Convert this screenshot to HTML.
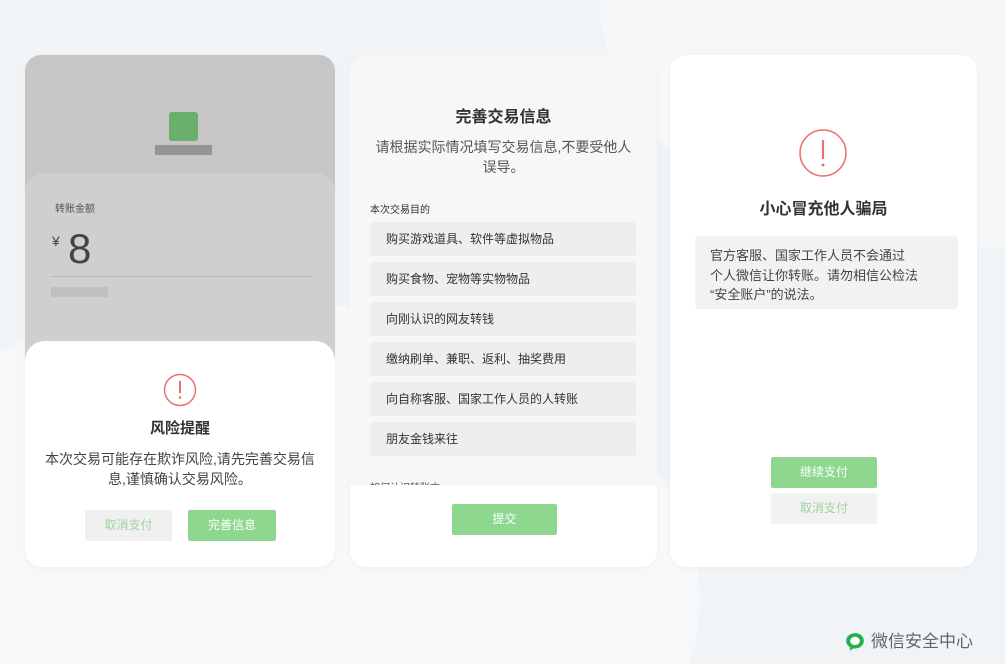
<!DOCTYPE html>
<html style="width:1005px;height:664px;overflow:hidden"><head><meta charset="utf-8"><style>
*{margin:0;padding:0;box-sizing:border-box}
body{width:1005px;height:664px;background:#f1f4f6;position:relative;overflow:hidden;font-family:"Liberation Sans","Noto Sans CJK SC",sans-serif;color:#333}
.abs{position:absolute}
.card{position:absolute;top:55px;height:512px;border-radius:16px;overflow:hidden;box-shadow:0 1px 4px rgba(0,0,0,.04)}
.c{text-align:center;position:absolute;left:0;right:0}
.btn{position:absolute;height:31px;line-height:31px;text-align:center;font-size:12px;border-radius:2px}
.g{background:#8dd88e;color:#fff}
.gr{background:#f0f0f0;color:#9dd49f}
.opt{position:absolute;left:20px;width:266px;height:34px;background:#eeeeee;border-radius:3px;font-size:12px;line-height:34px;padding-left:16px;color:#333}
</style></head><body>
<div class="abs" style="left:0;top:0;width:1005px;height:664px;overflow:hidden">
<div class="abs" style="left:-200px;top:300px;width:900px;height:600px;border-radius:50%;background:#f6f8f9"></div>
<div class="abs" style="left:600px;top:-250px;width:700px;height:500px;border-radius:50%;background:#f5f7f8"></div>
</div>

<!-- card 1 -->
<div class="card" style="left:25px;width:310px;background:#c6c6c6">
  <div class="abs" style="left:144px;top:57px;width:29px;height:29px;background:#6baf6d;border-radius:3px"></div>
  <div class="abs" style="left:130px;top:90px;width:57px;height:10px;background:#949494"></div>
  <div class="abs" style="left:0;top:118px;width:310px;height:240px;background:#cfcfcf;border-radius:20px 20px 0 0"></div>
  <div class="abs" style="left:30px;top:145px;font-size:10px;color:#555">转账金额</div>
  <div class="abs" style="left:27px;top:178px;font-size:14px;color:#444">¥</div>
  <div class="abs" style="left:43px;top:170px;font-size:42px;color:#444;line-height:48px;font-weight:300">8</div>
  <div class="abs" style="left:26px;top:221px;width:260px;height:1px;background:#b9b9b9"></div>
  <div class="abs" style="left:26px;top:232px;width:57px;height:10px;background:#c0c0c0"></div>
  <div class="abs" style="left:0;top:286px;width:310px;height:226px;background:#fff;border-radius:20px 20px 0 0">
    <svg class="abs" style="left:138px;top:32px" width="34" height="34" viewBox="0 0 34 34"><circle cx="17" cy="17" r="15.5" fill="none" stroke="#e97070" stroke-width="1.5"/><line x1="17" y1="8" x2="17" y2="20" stroke="#e97070" stroke-width="2"/><circle cx="17" cy="24.5" r="1.3" fill="#e97070"/></svg>
    <div class="c" style="top:76px;font-size:15px;font-weight:bold;color:#333">风险提醒</div>
    <div class="c" style="top:108px;font-size:14px;line-height:20px;color:#444">本次交易可能存在欺诈风险,请先完善交易信<br>息,谨慎确认交易风险。</div>
  </div>
  <div class="btn gr" style="left:60px;top:455px;width:87px">取消支付</div>
  <div class="btn g" style="left:163px;top:455px;width:88px">完善信息</div>
</div>

<!-- card 2 -->
<div class="card" style="left:350px;width:307px;background:#f7f7f7">
  <div class="c" style="top:48px;font-size:16px;font-weight:bold;color:#333">完善交易信息</div>
  <div class="c" style="top:82px;font-size:14px;line-height:20px;color:#555">请根据实际情况填写交易信息,不要受他人<br>误导。</div>
  <div class="abs" style="left:20px;top:146px;font-size:10px;color:#333">本次交易目的</div>
  <div class="opt" style="top:167px">购买游戏道具、软件等虚拟物品</div>
  <div class="opt" style="top:207px">购买食物、宠物等实物物品</div>
  <div class="opt" style="top:247px">向刚认识的网友转钱</div>
  <div class="opt" style="top:287px">缴纳刷单、兼职、返利、抽奖费用</div>
  <div class="opt" style="top:327px">向自称客服、国家工作人员的人转账</div>
  <div class="opt" style="top:367px">朋友金钱来往</div>
  <div class="abs" style="left:20px;top:424px;font-size:10px;color:#555">如何认识转账方</div>
  <div class="abs" style="left:0;top:430px;width:307px;height:82px;background:#fff"></div>
  <div class="btn g" style="left:102px;top:449px;width:105px">提交</div>
</div>

<!-- card 3 -->
<div class="card" style="left:670px;width:307px;background:#fff">
  <svg class="abs" style="left:128px;top:73px" width="50" height="50" viewBox="0 0 50 50"><circle cx="25" cy="25" r="23" fill="none" stroke="#e97070" stroke-width="1.5"/><line x1="25" y1="12" x2="25" y2="31" stroke="#e97070" stroke-width="2.2"/><circle cx="25" cy="37" r="1.5" fill="#e97070"/></svg>
  <div class="c" style="top:140px;font-size:16px;font-weight:bold;color:#333">小心冒充他人骗局</div>
  <div class="abs" style="left:25px;top:181px;width:263px;height:73px;background:#f2f2f2;border-radius:4px;padding:10px 0 0 15px;font-size:13px;line-height:19.5px;color:#444">官方客服、国家工作人员不会通过<br>个人微信让你转账。请勿相信公检法<br>“安全账户”的说法。</div>
  <div class="btn g" style="left:101px;top:402px;width:106px">继续支付</div>
  <div class="btn gr" style="left:101px;top:438px;width:106px;background:#f2f2f2">取消支付</div>
</div>

<!-- footer -->
<svg class="abs" style="left:844px;top:631px" width="22" height="22" viewBox="0 0 20 20"><path d="M10 2C5.3 2 2 5 2 9c0 2.6 1.5 4.6 3.7 5.8L5 18l3.6-2.2c.5.1.9.1 1.4.1 4.7 0 8-3 8-7s-3.3-7-8-7z" fill="#20b14a"/><ellipse cx="10" cy="9" rx="4.4" ry="3.8" fill="#fff"/></svg>
<div class="abs" style="left:871px;top:631px;font-size:17px;color:#666;line-height:22px">微信安全中心</div>
</body></html>
